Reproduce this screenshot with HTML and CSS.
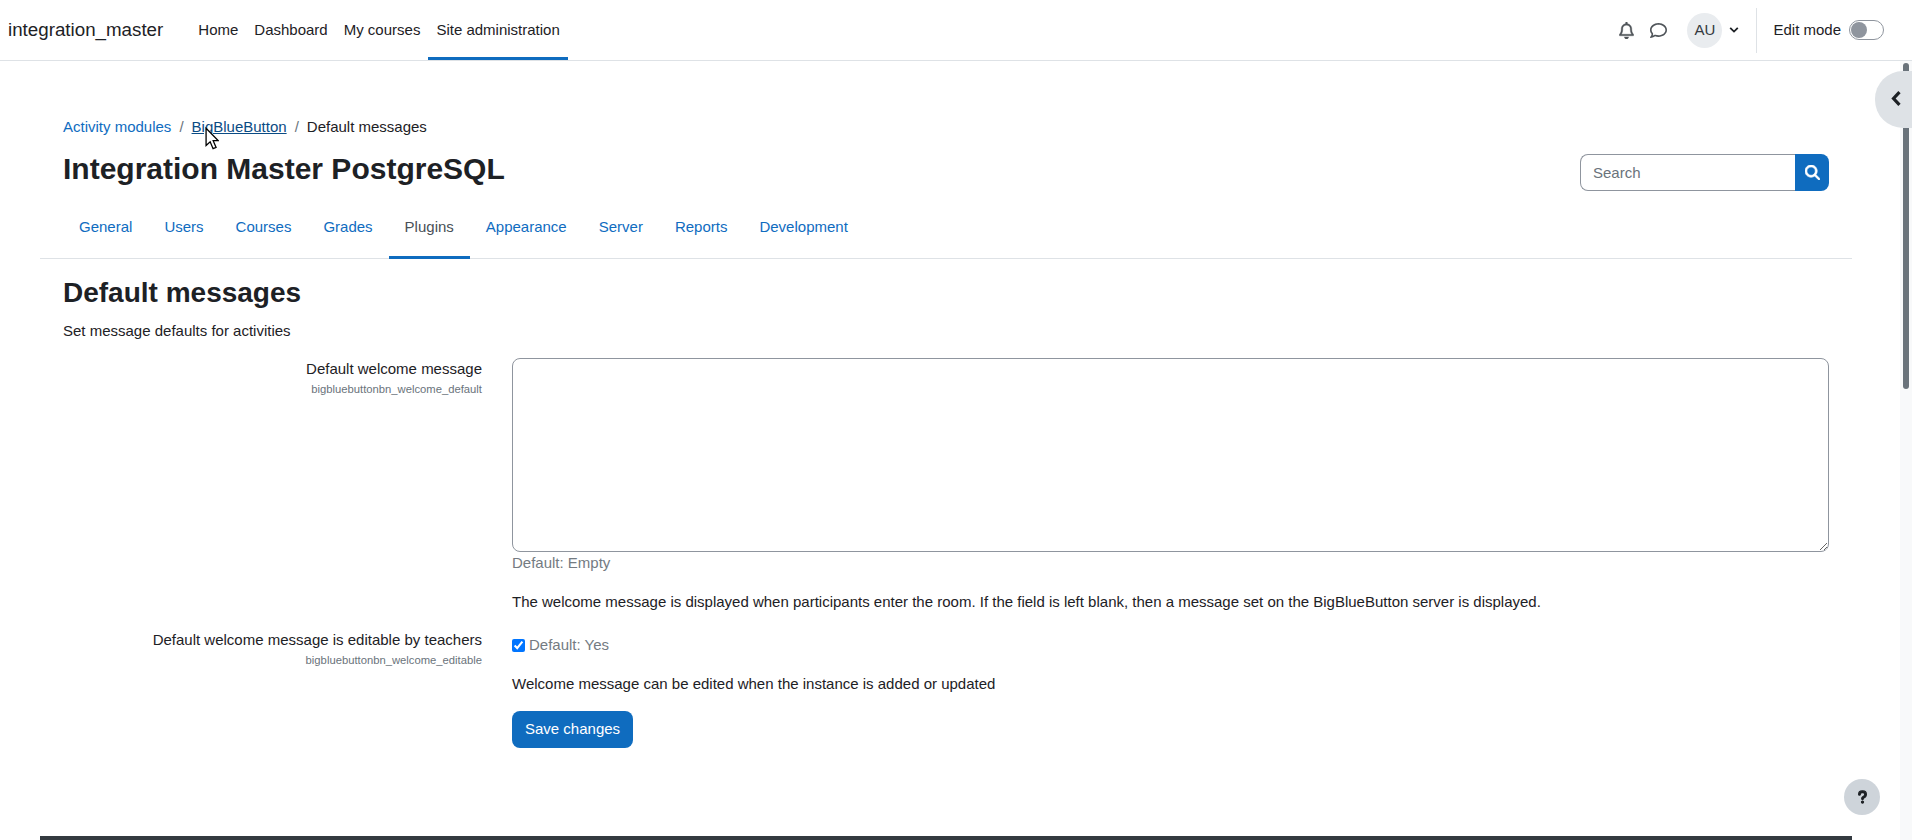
FILE: index.html
```html
<!DOCTYPE html>
<html lang="en">
<head>
<meta charset="utf-8">
<title>Default messages</title>
<link rel="stylesheet" href="styles.css">
</head>
<body>
<header class="navbar">
  <a class="brand" href="#">integration_master</a>
  <nav class="primary">
    <a href="#">Home</a>
    <a href="#">Dashboard</a>
    <a href="#">My courses</a>
    <a class="active" href="#">Site administration</a>
  </nav>
  <div class="usernav">
    <svg class="ic-bell" viewBox="0 0 448 512"><path d="M224 0c-17.7 0-32 14.3-32 32V49.9C119.5 61.4 64 124.2 64 200v33.4c0 45.4-15.5 89.5-43.8 124.9L5.3 377c-5.8 7.2-6.9 17.1-2.9 25.4S14.8 416 24 416H424c9.2 0 17.6-5.3 21.6-13.6s2.9-18.2-2.9-25.4l-14.9-18.6C399.5 322.9 384 278.8 384 233.4V200c0-75.8-55.5-138.6-128-150.1V32c0-17.7-14.3-32-32-32zm0 96h8c57.4 0 104 46.6 104 104v33.4c0 47.9 13.9 94.6 39.7 134.6H72.3C98.1 328 112 281.3 112 233.4V200c0-57.4 46.6-104 104-104h8zm64 352H224 160c0 17 6.7 33.3 18.7 45.3s28.3 18.7 45.3 18.7s33.3-6.7 45.3-18.7s18.7-28.3 18.7-45.3z"/></svg>
    <svg class="ic-comment" viewBox="0 0 512 512"><path d="M123.6 391.3c12.9-9.4 29.6-11.8 44.6-6.4c26.5 9.6 56.2 15.1 87.8 15.1c124.7 0 208-80.5 208-160s-83.3-160-208-160S48 160.5 48 240c0 32 12.4 62.8 35.7 89.2c8.6 9.7 12.8 22.5 11.8 35.5c-1.4 18.1-5.7 34.7-11.3 49.4c17-7.9 31.1-16.7 39.4-22.7zM21.2 431.9c1.8-2.7 3.5-5.4 5.1-8.1c10-16.6 19.5-38.4 21.4-62.9C17.7 326.8 0 285.1 0 240C0 125.1 114.6 32 256 32s256 93.1 256 208s-114.6 208-256 208c-37.1 0-72.3-6.4-104.1-17.9c-11.9 8.7-31.3 20.6-54.3 30.6c-15.1 6.6-32.3 12.6-50.1 16.1c-.8 .2-1.6 .3-2.4 .5c-4.4 .8-8.7 1.5-13.2 1.9c-.2 0-.5 .1-.7 .1c-5.1 .5-10.2 .8-15.3 .8c-6.5 0-12.3-3.9-14.8-9.9c-2.5-6-1.1-12.8 3.4-17.4c4.1-4.2 7.8-8.7 11.3-13.5c1.7-2.3 3.3-4.6 4.8-6.9c.1-.2 .2-.3 .3-.5z"/></svg>
    <span class="avatar">AU</span>
    <svg class="ic-caret" viewBox="0 0 10 8"><path d="M1.2 1.8 5 5.6 8.8 1.8"/></svg>
    <span class="divider"></span>
    <span class="editlabel">Edit mode</span>
    <span class="toggle"><span class="knob"></span></span>
  </div>
</header>

<div class="viewport">
  <main class="page">
    <div class="content-head">
      <ol class="breadcrumb">
        <li><a href="#">Activity modules</a></li>
        <li class="sep">/</li>
        <li><a class="hovered" href="#">BigBlueButton</a></li>
        <li class="sep">/</li>
        <li>Default messages</li>
      </ol>
      <div class="titlerow">
        <h1>Integration Master PostgreSQL</h1>
        <form class="search">
          <input class="search-input" type="text" placeholder="Search">
          <span class="search-btn">
            <svg viewBox="0 0 512 512"><path d="M416 208c0 45.9-14.9 88.3-40 122.7L502.6 457.4c12.5 12.5 12.5 32.8 0 45.3s-32.8 12.5-45.3 0L330.7 376c-34.4 25.2-76.8 40-122.7 40C93.1 416 0 322.9 0 208S93.1 0 208 0S416 93.1 416 208zM208 352a144 144 0 1 0 0-288 144 144 0 1 0 0 288z"/></svg>
          </span>
        </form>
      </div>
    </div>
    <nav class="tabs">
      <a href="#">General</a>
      <a href="#">Users</a>
      <a href="#">Courses</a>
      <a href="#">Grades</a>
      <a class="active" href="#">Plugins</a>
      <a href="#">Appearance</a>
      <a href="#">Server</a>
      <a href="#">Reports</a>
      <a href="#">Development</a>
    </nav>
    <section class="settings">
      <h2>Default messages</h2>
      <p class="intro">Set message defaults for activities</p>
      <div class="row row-first">
        <div class="label"><label>Default welcome message</label><span class="setting-name">bigbluebuttonbn_welcome_default</span></div>
        <div class="field">
          <textarea class="textarea"></textarea>
          <div class="default">Default: Empty</div>
          <p class="desc desc-first">The welcome message is displayed when participants enter the room. If the field is left blank, then a message set on the BigBlueButton server is displayed.</p>
        </div>
      </div>
      <div class="row row-second">
        <div class="label"><label>Default welcome message is editable by teachers</label><span class="setting-name">bigbluebuttonbn_welcome_editable</span></div>
        <div class="field">
          <div class="checkline"><input class="check" type="checkbox" checked><span class="default">Default: Yes</span></div>
          <p class="desc desc-second">Welcome message can be edited when the instance is added or updated</p>
          <button class="save" type="button">Save changes</button>
        </div>
      </div>
    </section>
    <footer class="pagefooter"></footer>
  </main>
  <div class="scrollbar"><span class="thumb"></span></div>
  <button class="drawer-toggle" type="button" aria-label="Open block drawer">
    <svg viewBox="0 0 10 16"><path d="M7.8 2 2.2 8l5.6 6"/></svg>
  </button>
  <button class="help" type="button" aria-label="Help">
    <svg viewBox="0 0 320 512"><path d="M80 160c0-35.3 28.7-64 64-64h32c35.3 0 64 28.7 64 64v3.6c0 21.8-11.1 42.1-29.4 53.8l-42.2 27.1c-25.2 16.2-40.4 44.1-40.4 74V320c0 17.7 14.3 32 32 32s32-14.3 32-32v-1.4c0-8.2 4.2-15.8 11-20.2l42.2-27.1c36.6-23.6 58.8-64.1 58.8-107.7V160c0-70.7-57.3-128-128-128H144C73.3 32 16 89.3 16 160c0 17.7 14.3 32 32 32s32-14.3 32-32zm80 320a40 40 0 1 0 0-80 40 40 0 1 0 0 80z"/></svg>
  </button>
</div>
<svg class="cursor" viewBox="0 0 13 22"><path d="M1 1v16l3.8-3.4L7.5 20l2.8-1.2-2.7-6.2H12.4z"/></svg>
</body>
</html>
```
FILE: styles.css
```css
* { box-sizing: border-box; }
html, body { height: 100%; margin: 0; overflow: hidden; }
body {
  display: flex;
  flex-direction: column;
  font-family: "Liberation Sans", Arial, sans-serif;
  font-size: 15px;
  line-height: 22.5px;
  color: #1d2125;
  background: #fff;
}
a { color: #0f6cbf; text-decoration: none; }

/* top navbar */
.navbar {
  flex: 0 0 61px;
  display: flex;
  align-items: stretch;
  padding: 0 28px 0 8px;
  border-bottom: 1px solid #dee2e6;
  background: #fff;
}
.brand {
  align-self: center;
  font-size: 18.75px;
  color: #1d2125;
  margin-right: 27px;
}
.primary { display: flex; }
.primary a {
  display: flex;
  align-items: center;
  padding: 3px 8px 0;
  color: #1d2125;
  border-bottom: 3px solid transparent;
}
.primary a.active { border-bottom-color: #0f6cbf; }
.usernav { margin-left: auto; display: flex; align-items: center; }
.ic-bell { width: 15px; height: 17px; fill: #4f5459; stroke: #4f5459; stroke-width: 10; margin-right: 16px; }
.ic-comment { width: 17px; height: 17px; fill: #4f5459; margin-right: 20px; }
.avatar {
  width: 35px;
  height: 35px;
  border-radius: 50%;
  background: #e9ecef;
  display: flex;
  align-items: center;
  justify-content: center;
  color: #343a40;
}
.ic-caret { width: 10px; height: 8px; margin-left: 7px; fill: none; stroke: #1d2125; stroke-width: 1.8; }
.divider { width: 1px; height: 45px; background: #dee2e6; margin: 0 16px 0 17px; }
.editlabel { margin-right: 8px; }
.toggle {
  width: 35px;
  height: 20px;
  border: 1px solid #8f959e;
  border-radius: 10px;
  padding: 1px;
  background: #fff;
}
.knob { display: block; width: 16px; height: 16px; border-radius: 50%; background: #8f959e; }

/* page frame */
.viewport { flex: 1; display: flex; position: relative; min-height: 0; }
.page { flex: 1; min-width: 0; padding: 0 48px 0 40px; overflow: hidden; }
.scrollbar { flex: 0 0 12px; background: #f8f9fa; padding: 2px 3px 0; }
.thumb { display: block; height: 326px; border-radius: 3px; background: #6a737b; }

/* heading */
.content-head { padding: 55px 23px 0; }
.breadcrumb { display: flex; list-style: none; margin: 0; padding: 0; }
.breadcrumb .sep { color: #6a737b; margin: 0 8px; }
.breadcrumb a.hovered { color: #0a4b84; text-decoration: underline; }
.titlerow { display: flex; justify-content: space-between; align-items: center; margin-top: 11px; height: 38px; }
h1 { margin: 0; font-size: 30px; line-height: 36px; font-weight: 700; }
.search { display: flex; width: 249px; height: 37px; margin-top: 7px; }
.search-input {
  flex: 1;
  min-width: 0;
  height: 37px;
  border: 1px solid #8f959e;
  border-right: 0;
  border-radius: 8px 0 0 8px;
  padding: 0 12px;
  font: 15px "Liberation Sans", Arial, sans-serif;
  outline: 0;
}
.search-input::placeholder { color: #6a737b; opacity: 1; }
.search-btn {
  flex: 0 0 34px;
  background: #0f6cbf;
  border-radius: 0 8px 8px 0;
  display: flex;
  align-items: center;
  justify-content: center;
}
.search-btn svg { width: 15px; height: 15px; fill: #fff; stroke: #fff; stroke-width: 24; }

/* tabs */
.tabs { display: flex; margin-top: 16.5px; padding-left: 23px; height: 55px; border-bottom: 1px solid #dee2e6; }
.tabs a { padding: 12px 16px 0; height: 55px; border-bottom: 3px solid transparent; }
.tabs a.active { color: #495057; border-bottom-color: #0f6cbf; }

/* settings form */
.settings { padding: 0 23px; }
h2 { margin: 16px 0 0; font-size: 28px; line-height: 36px; font-weight: 700; }
.intro { margin: 9px 0 0; line-height: 22px; }
.row { display: flex; }
.row-first { margin-top: 16px; }
.row-second { margin-top: 16px; }
.label { flex: 0 0 419px; display: flex; flex-direction: column; align-items: flex-end; }
.label label { line-height: 22px; }
.setting-name { font-size: 11.25px; line-height: 17px; margin-top: 1px; color: #6a737b; }
.field { margin-left: 30px; flex: 1; min-width: 0; }
.textarea {
  display: block;
  width: 100%;
  height: 194px;
  border: 1px solid #8f959e;
  border-radius: 8px;
  outline: 0;
  background: #fff;
}
.default { color: #747b82; }
.desc { margin: 0; }
.desc-first { margin-top: 16px; }
.desc-second { margin-top: 17px; }
.checkline { display: flex; align-items: center; margin-top: 5px; height: 22px; }
.check { width: 13px; height: 13px; margin: 0 4px 0 0; accent-color: #0075ff; }
.save {
  display: block;
  margin-top: 15px;
  height: 37px;
  padding: 0 13px 2px;
  border: 0;
  border-radius: 8px;
  background: #0f6cbf;
  color: #fff;
  font: 15px "Liberation Sans", Arial, sans-serif;
}
.pagefooter { margin-top: 88px; height: 200px; background: #343a40; }

/* floating controls */
.drawer-toggle {
  position: absolute;
  top: 10px;
  right: 0;
  width: 37px;
  height: 57px;
  padding: 0 0 2px 16px;
  border: 0;
  border-radius: 28px 0 0 28px;
  background: #dee2e6;
  display: flex;
  align-items: center;
  justify-content: flex-start;
}
.drawer-toggle svg { width: 11px; height: 17px; fill: none; stroke: #1d2125; stroke-width: 3; }
.help {
  position: absolute;
  left: 1844px;
  top: 718px;
  width: 36px;
  height: 36px;
  padding: 0;
  border: 0;
  border-radius: 50%;
  background: #ced4da;
  display: flex;
  align-items: center;
  justify-content: center;
}
.help svg { width: 9px; height: 14px; fill: #1d2125; stroke: #1d2125; stroke-width: 40; }
.cursor {
  position: absolute;
  left: 205px;
  top: 127px;
  width: 14px;
  height: 24px;
  fill: #fff;
  stroke: #000;
  stroke-width: 1.2;
}
```
